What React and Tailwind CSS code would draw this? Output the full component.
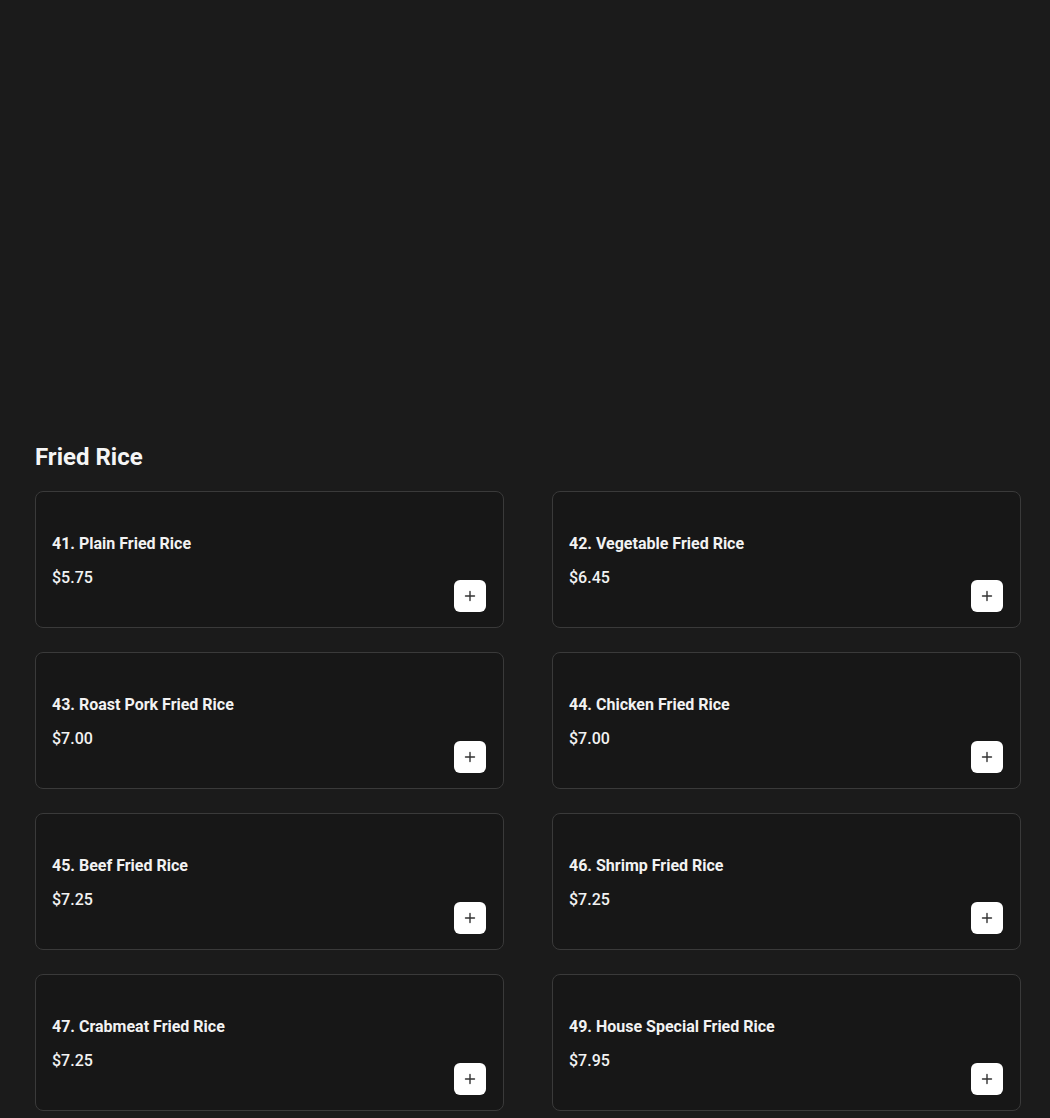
import React from "react";

const items = [
  ["41. Plain Fried Rice", "$5.75"],
  ["42. Vegetable Fried Rice", "$6.45"],
  ["43. Roast Pork Fried Rice", "$7.00"],
  ["44. Chicken Fried Rice", "$7.00"],
  ["45. Beef Fried Rice", "$7.25"],
  ["46. Shrimp Fried Rice", "$7.25"],
  ["47. Crabmeat Fried Rice", "$7.25"],
  ["49. House Special Fried Rice", "$7.95"],
];

function PlusIcon() {
  return (
    <svg width="12" height="12" viewBox="0 0 12 12" fill="none">
      <path d="M6 1.5v9M1.5 6h9" stroke="#333" strokeWidth="1.4" strokeLinecap="round" />
    </svg>
  );
}

export default function App() {
  return (
    <div
      className="min-h-[1118px] bg-[#1b1b1b] text-white pl-[35px] pr-[29px]"
      style={{ fontFamily: "Roboto, 'Liberation Sans', sans-serif" }}
    >
      <div className="h-[441px]" />
      <h2 className="text-[24px] leading-8 font-bold text-[#f5f5f5]">Fried Rice</h2>
      <div className="mt-[18px] grid grid-cols-2 gap-x-[48px] gap-y-[24px]">
        {items.map(([name, price]) => (
          <div
            key={name}
            className="h-[137px] rounded-lg border border-[#3a3a3a] bg-[#171717] pl-4 pt-4 pr-[17px] pb-[15px] flex justify-between"
          >
            <div className="self-center pt-[2px]">
              <div className="text-[16px] leading-6 font-bold text-[#f2f2f2]">{name}</div>
              <div className="mt-[10px] text-[16px] leading-6 font-medium text-[#f2f2f2]">{price}</div>
            </div>
            <button className="self-end w-8 h-8 rounded-md bg-white flex items-center justify-center">
              <PlusIcon />
            </button>
          </div>
        ))}
      </div>
    </div>
  );
}
